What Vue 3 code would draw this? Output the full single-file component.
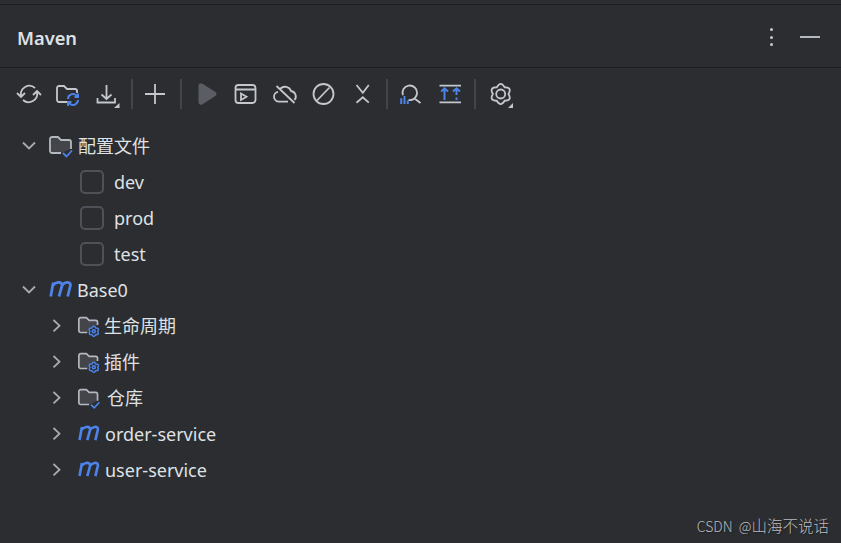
<script setup>
const profiles = ['dev', 'prod', 'test']
const modules = [
  { label: '生命周期', icon: 'gear', cjk: true },
  { label: '插件', icon: 'gear', cjk: true },
  { label: '仓库', icon: 'check', cjk: true, wide: true },
  { label: 'order-service', icon: 'm' },
  { label: 'user-service', icon: 'm' }
]

function flower(cx, cy, inner, ctrl) {
  let d = ''
  for (let k = 0; k < 6; k++) {
    const lobe = ((-90 + 60 * k) * Math.PI) / 180
    const a = lobe - Math.PI / 6
    const b = lobe + Math.PI / 6
    if (k === 0) d += `M${(cx + inner * Math.cos(a)).toFixed(2)} ${(cy + inner * Math.sin(a)).toFixed(2)}`
    d += `Q${(cx + ctrl * Math.cos(lobe)).toFixed(2)} ${(cy + ctrl * Math.sin(lobe)).toFixed(2)} ${(cx + inner * Math.cos(b)).toFixed(2)} ${(cy + inner * Math.sin(b)).toFixed(2)}`
  }
  return d + 'z'
}
const settingsGear = flower(15.7, 15, 7.8, 13.5)
const badgeGear = flower(18, 20.7, 4.2, 7.4)
</script>

<template>
  <div class="panel">
    <div class="topstrip"></div>
    <header class="header">
      <h1 class="title">Maven</h1>
      <div class="header-actions">
        <span class="dots"><i></i><i></i><i></i></span>
        <span class="dash"></span>
      </div>
    </header>

    <div class="toolbar">
      <button class="tool">
        <svg viewBox="0 0 30 30" class="ic"><path d="M7 17A8.500 8.500 0 0 1 21 9M23 13A8.500 8.500 0 0 1 9 21M3 14l4 4 4-4M19 16l4-4 4 4" /></svg>
      </button>
      <button class="tool">
        <svg viewBox="0 0 30 30" class="ic"><path d="M14 23H6a2 2 0 0 1-2-2V9a2 2 0 0 1 2-2h5l3 3h8a2 2 0 0 1 2 2v2" /><g class="blue"><path d="M15 20a5 5 0 0 1 8.500-3.500l1.500 1.500M25 21a5 5 0 0 1-8.500 3.500L15 23" /><path d="M25 14.500V18h-3.500M15 27V23h3.500" /></g></svg>
      </button>
      <button class="tool">
        <svg viewBox="0 0 30 30" class="ic"><path d="M14.500 6v13M9.500 15.500l5 4.500 5-4.500M5.500 19v4.500H23V19" /><path class="tri" d="M27.500 24v5H22z" /></svg>
      </button>
      <span class="sep"></span>
      <button class="tool">
        <svg viewBox="0 0 30 30" class="ic"><path d="M15 5v20M5 15h20" /></svg>
      </button>
      <span class="sep wide"></span>
      <button class="tool">
        <svg viewBox="0 0 30 30" class="ic"><path class="muted" d="M7.500 7c0-2.500 2-3.500 4-2.300L24 12.700c2 1.200 2 3.400 0 4.600L11.500 25.300c-2 1.200-4 .2-4-2.300z" /></svg>
      </button>
      <button class="tool">
        <svg viewBox="0 0 30 30" class="ic"><rect x="5.500" y="6" width="20" height="18" rx="3" /><path d="M5.500 10.500h20M11 14.500V21l5.500-3.200z" /></svg>
      </button>
      <button class="tool">
        <svg viewBox="0 0 30 30" class="ic"><path d="M19 22.700H10a5 5 0 0 1-1-9.900M11.500 9.500A6.500 6.500 0 0 1 22 12a5.500 5.500 0 0 1 3.500 9M7.500 7l18 17" /></svg>
      </button>
      <button class="tool">
        <svg viewBox="0 0 30 30" class="ic"><circle cx="15.500" cy="15" r="10" /><path d="M9 21.500L21.500 8.500" /></svg>
      </button>
      <button class="tool">
        <svg viewBox="0 0 30 30" class="ic"><path d="M9.500 6l6.300 7.700L21.800 6M9.500 23.700l6.300-5.400 6 5.400" /></svg>
      </button>
      <span class="sep"></span>
      <button class="tool">
        <svg viewBox="0 0 30 30" class="ic"><path d="M7.900 16.200A7.300 7.300 0 1 1 13.500 21M19.500 19.500L25.500 24" /><g class="blue"><path d="M6.200 19.300V25M9.500 17V25M12.800 21.500V25" /></g></svg>
      </button>
      <button class="tool">
        <svg viewBox="0 0 30 30" class="ic"><path d="M5.500 6.700H27M5.500 23.300H27" /><g class="blue"><path d="M10.500 9.300V21M7.200 12.600l3.300-3.300 3.500 3.300M22.500 9.300V16M22.500 18.500V21M19 12.600l3.500-3.300 3.500 3.300" /></g></svg>
      </button>
      <span class="sep wide"></span>
      <button class="tool">
        <svg viewBox="0 0 30 30" class="ic"><path :d="settingsGear" /><circle cx="15.700" cy="15" r="4.500" /><path class="tri" d="M28 24v5h-5z" /></svg>
      </button>
    </div>

    <div class="tree">
      <div class="row">
        <svg viewBox="0 0 18 18" class="chev"><path d="M3 5.500l6 6 6-6" /></svg>
        <svg viewBox="0 0 30 30" class="node"><path class="folder" d="M13 22H4a2 2 0 0 1-2-2V8a2 2 0 0 1 2-2h6l3 3h8a2 2 0 0 1 2 2v7" /><path class="check" d="M15 22l3.500 3.500L24 19.500" /></svg>
        <span class="label cjk">配置文件</span>
      </div>
      <div v-for="p in profiles" :key="p" class="row profile">
        <span class="box"></span>
        <span class="label">{{ p }}</span>
      </div>
      <div class="row">
        <svg viewBox="0 0 18 18" class="chev"><path d="M3 5.500l6 6 6-6" /></svg>
        <svg viewBox="0 0 30 30" class="node"><path class="maven" d="M2.700 21.500L5.300 7.500M5 10.500C7 7.500 13 5.500 14.200 10L11 21.500M14 10.500C16 7.500 22 5.500 22.500 10L19.700 21.500" /></svg>
        <span class="label tight">Base0</span>
      </div>
      <div v-for="m in modules" :key="m.label" class="row nested">
        <svg viewBox="0 0 18 18" class="chev"><path d="M5.500 3l6 5.700-6 5.700" /></svg>
        <svg v-if="m.icon === 'm'" viewBox="0 0 30 30" class="node"><path class="maven" d="M2.700 21.500L5.300 7.500M5 10.500C7 7.500 13 5.500 14.200 10L11 21.500M14 10.500C16 7.500 22 5.500 22.500 10L19.700 21.500" /></svg>
        <svg v-else-if="m.icon === 'gear'" viewBox="0 0 30 30" class="node"><path class="folder" d="M11 22H4a2 2 0 0 1-2-2V8a2 2 0 0 1 2-2h6l3 3h7a2 2 0 0 1 2 2v3" /><path class="gear" :d="badgeGear" /><circle class="gear" cx="18" cy="20.700" r="1.600" /></svg>
        <svg v-else viewBox="0 0 30 30" class="node"><path class="folder" d="M13 22H4a2 2 0 0 1-2-2V8a2 2 0 0 1 2-2h6l3 3h7a2 2 0 0 1 2 2v7" /><path class="check" d="M15 22l3.500 3.500L24 19.500" /></svg>
        <span class="label" :class="{ shifted: m.wide, cjk: m.cjk }">{{ m.label }}</span>
      </div>
    </div>

    <div class="watermark"><span class="wm-latin">CSDN @</span>山海不说话</div>
  </div>
</template>

<style scoped>
.panel {
  position: relative;
  width: 841px;
  height: 543px;
  background: #2b2d30;
  color: #dfe1e5;
  font-family: "Noto Sans", "Noto Sans CJK SC", sans-serif;
  overflow: hidden;
}
.topstrip {
  height: 4px;
  border-bottom: 1px solid #1e1f22;
}
.header {
  height: 62px;
  display: flex;
  align-items: center;
  justify-content: space-between;
  padding: 0 21px 0 17px;
  border-bottom: 1px solid #1e1f22;
}
.title {
  margin: 2px 0 0;
  font-size: 18.300px;
  font-weight: 600;
}
.header-actions {
  margin-top: 2px;
  display: flex;
  align-items: center;
  gap: 27px;
}
.dots {
  display: flex;
  flex-direction: column;
  gap: 4.500px;
}
.dots i {
  width: 3px;
  height: 3px;
  background: #c8cad0;
  border-radius: 50%;
}
.dash {
  width: 20px;
  height: 2px;
  background: #b4b8bf;
}
.toolbar {
  height: 52px;
  display: flex;
  align-items: center;
  padding-left: 9px;
}
.tool {
  width: 39px;
  height: 30px;
  padding: 0;
  border: 0;
  background: none;
  display: flex;
  align-items: center;
  justify-content: center;
}
.ic {
  width: 30px;
  height: 30px;
  fill: none;
  stroke: #c4c7cd;
  stroke-width: 1.800;
  overflow: visible;
}
.ic .blue {
  stroke: #4d84ea;
  stroke-width: 2;
}
.ic .muted {
  fill: #5a5d63;
  stroke: none;
}
.ic .tri {
  fill: #c4c7cd;
  stroke: none;
}
.sep {
  box-sizing: border-box;
  width: 9px;
  height: 30px;
  padding-left: 3px;
  display: flex;
  justify-content: center;
}
.sep.wide {
  width: 12px;
  padding-left: 2px;
}
.sep::before {
  content: "";
  width: 2px;
  height: 30px;
  background: #43454a;
}
.tree {
  padding-top: 8px;
}
.row {
  height: 36px;
  display: flex;
  align-items: center;
  padding-left: 20px;
  font-size: 18px;
}
.row.nested {
  padding-left: 48px;
}
.row.profile {
  padding-left: 80px;
  gap: 10px;
}
.chev {
  width: 18px;
  height: 18px;
  margin-right: 10px;
  fill: none;
  stroke: #a8abb2;
  stroke-width: 1.800;
}
.row.nested .chev {
  margin-right: 11px;
}
.node {
  width: 30px;
  height: 30px;
  flex: none;
  fill: none;
  overflow: visible;
}
.row.nested .node {
  width: 28px;
}
.folder {
  fill: #43454a;
  stroke: #b4b8bf;
  stroke-width: 1.800;
}
.check {
  stroke: #4d84ea;
  stroke-width: 1.800;
}
.gear {
  fill: #2b2d30;
  stroke: #4d84ea;
  stroke-width: 1.600;
}
.maven {
  stroke: #4d84ea;
  stroke-width: 2.800;
}
.box {
  width: 24px;
  height: 24px;
  box-sizing: border-box;
  border: 2px solid #4e5157;
  border-radius: 5px;
}
.cjk {
  padding-bottom: 2px;
}
.row.nested .cjk {
  margin-left: -1px;
}
.row.nested .cjk.shifted {
  margin-left: 2px;
}
.tight {
  margin-left: -1px;
}
.watermark {
  position: absolute;
  right: 12px;
  bottom: 7px;
  font-family: "Noto Sans CJK SC", sans-serif;
  font-size: 15.500px;
  font-weight: 300;
  color: #b9bbbf;
  text-shadow: 1px 1px 1px #1e1f22;
}
.wm-latin {
  font-size: 14px;
  word-spacing: 3px;
}
</style>
